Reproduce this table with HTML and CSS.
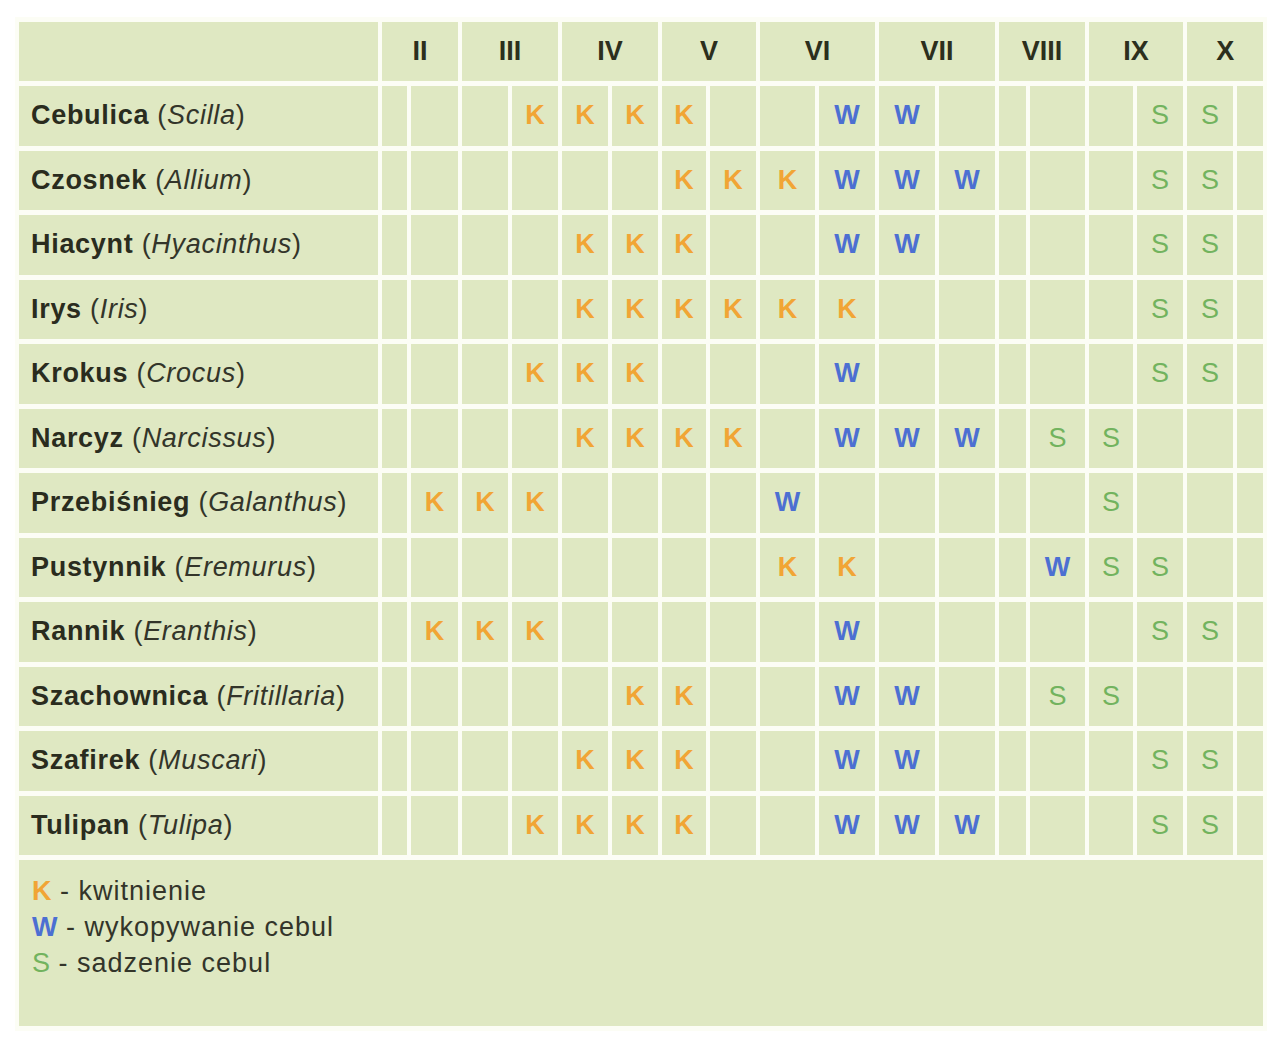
FILE: index.html
```html
<!DOCTYPE html>
<html lang="pl">
<head>
<meta charset="utf-8">
<title>Kalendarz roślin cebulowych</title>
<link rel="stylesheet" href="styles.css">
</head>
<body>
<table class="cal">
  <colgroup>
    <col class="c-name">
    <col class="w25"><col class="w47"><col class="w46"><col class="w46"><col class="w46"><col class="w46">
    <col class="w44"><col class="w46"><col class="w55"><col class="w56"><col class="w56"><col class="w56">
    <col class="w27"><col class="w55"><col class="w44"><col class="w46"><col class="w46"><col class="w26">
  </colgroup>
  <thead>
    <tr class="head">
      <th class="corner"></th>
      <th colspan="2">II</th><th colspan="2">III</th><th colspan="2">IV</th><th colspan="2">V</th>
      <th colspan="2">VI</th><th colspan="2">VII</th><th colspan="2">VIII</th><th colspan="2">IX</th><th colspan="2">X</th>
    </tr>
  </thead>
  <tbody>
    <tr><td class="name"><b>Cebulica</b> (<i>Scilla</i>)</td>
      <td></td><td></td><td></td><td class="k">K</td><td class="k">K</td><td class="k">K</td><td class="k">K</td><td></td><td></td><td class="w">W</td><td class="w">W</td><td></td><td></td><td></td><td></td><td class="s">S</td><td class="s">S</td><td></td></tr>
    <tr><td class="name"><b>Czosnek</b> (<i>Allium</i>)</td>
      <td></td><td></td><td></td><td></td><td></td><td></td><td class="k">K</td><td class="k">K</td><td class="k">K</td><td class="w">W</td><td class="w">W</td><td class="w">W</td><td></td><td></td><td></td><td class="s">S</td><td class="s">S</td><td></td></tr>
    <tr><td class="name"><b>Hiacynt</b> (<i>Hyacinthus</i>)</td>
      <td></td><td></td><td></td><td></td><td class="k">K</td><td class="k">K</td><td class="k">K</td><td></td><td></td><td class="w">W</td><td class="w">W</td><td></td><td></td><td></td><td></td><td class="s">S</td><td class="s">S</td><td></td></tr>
    <tr><td class="name"><b>Irys</b> (<i>Iris</i>)</td>
      <td></td><td></td><td></td><td></td><td class="k">K</td><td class="k">K</td><td class="k">K</td><td class="k">K</td><td class="k">K</td><td class="k">K</td><td></td><td></td><td></td><td></td><td></td><td class="s">S</td><td class="s">S</td><td></td></tr>
    <tr><td class="name"><b>Krokus</b> (<i>Crocus</i>)</td>
      <td></td><td></td><td></td><td class="k">K</td><td class="k">K</td><td class="k">K</td><td></td><td></td><td></td><td class="w">W</td><td></td><td></td><td></td><td></td><td></td><td class="s">S</td><td class="s">S</td><td></td></tr>
    <tr><td class="name"><b>Narcyz</b> (<i>Narcissus</i>)</td>
      <td></td><td></td><td></td><td></td><td class="k">K</td><td class="k">K</td><td class="k">K</td><td class="k">K</td><td></td><td class="w">W</td><td class="w">W</td><td class="w">W</td><td></td><td class="s">S</td><td class="s">S</td><td></td><td></td><td></td></tr>
    <tr><td class="name"><b>Przebiśnieg</b> (<i>Galanthus</i>)</td>
      <td></td><td class="k">K</td><td class="k">K</td><td class="k">K</td><td></td><td></td><td></td><td></td><td class="w">W</td><td></td><td></td><td></td><td></td><td></td><td class="s">S</td><td></td><td></td><td></td></tr>
    <tr><td class="name"><b>Pustynnik</b> (<i>Eremurus</i>)</td>
      <td></td><td></td><td></td><td></td><td></td><td></td><td></td><td></td><td class="k">K</td><td class="k">K</td><td></td><td></td><td></td><td class="w">W</td><td class="s">S</td><td class="s">S</td><td></td><td></td></tr>
    <tr><td class="name"><b>Rannik</b> (<i>Eranthis</i>)</td>
      <td></td><td class="k">K</td><td class="k">K</td><td class="k">K</td><td></td><td></td><td></td><td></td><td></td><td class="w">W</td><td></td><td></td><td></td><td></td><td></td><td class="s">S</td><td class="s">S</td><td></td></tr>
    <tr><td class="name"><b>Szachownica</b> (<i>Fritillaria</i>)</td>
      <td></td><td></td><td></td><td></td><td></td><td class="k">K</td><td class="k">K</td><td></td><td></td><td class="w">W</td><td class="w">W</td><td></td><td></td><td class="s">S</td><td class="s">S</td><td></td><td></td><td></td></tr>
    <tr><td class="name"><b>Szafirek</b> (<i>Muscari</i>)</td>
      <td></td><td></td><td></td><td></td><td class="k">K</td><td class="k">K</td><td class="k">K</td><td></td><td></td><td class="w">W</td><td class="w">W</td><td></td><td></td><td></td><td></td><td class="s">S</td><td class="s">S</td><td></td></tr>
    <tr><td class="name"><b>Tulipan</b> (<i>Tulipa</i>)</td>
      <td></td><td></td><td></td><td class="k">K</td><td class="k">K</td><td class="k">K</td><td class="k">K</td><td></td><td></td><td class="w">W</td><td class="w">W</td><td class="w">W</td><td></td><td></td><td></td><td class="s">S</td><td class="s">S</td><td></td></tr>
  </tbody>
  <tfoot>
    <tr>
      <td class="legend" colspan="19">
        <div class="legend-line"><span class="k">K</span> - kwitnienie</div>
        <div class="legend-line"><span class="w">W</span> - wykopywanie cebul</div>
        <div class="legend-line"><span class="s">S</span> - sadzenie cebul</div>
      </td>
    </tr>
  </tfoot>
</table>
</body>
</html>
```

FILE: styles.css
```css
html, body {
  margin: 0;
  background: #ffffff;
}

body {
  padding: 17px 0 0 15px;
  font-family: "Liberation Sans", Arial, sans-serif;
  color: #2c2c22;
}

.cal {
  table-layout: fixed;
  width: 1252px;
  border-collapse: separate;
  border-spacing: 4px 5px;
  background: #fcfdf5;
  font-size: 27px;
  letter-spacing: 0.7px;
}

.c-name { width: 359px; }
.w25 { width: 25px; }
.w26 { width: 26px; }
.w27 { width: 27px; }
.w44 { width: 44px; }
.w46 { width: 46px; }
.w47 { width: 47px; }
.w55 { width: 55px; }
.w56 { width: 56px; }

.cal th,
.cal td {
  background: #dfe8c2;
  padding: 0;
  text-align: center;
  vertical-align: middle;
}

.head th {
  height: 59px;
  font-weight: bold;
  color: #2c2f1d;
  letter-spacing: 0;
}

tbody tr {
  height: 59.5px;
}

.cal td.name {
  text-align: left;
  padding-left: 12px;
  white-space: nowrap;
  color: #33352a;
}

.name b {
  color: #2a2c1e;
}

.k, .w {
  font-weight: bold;
  letter-spacing: 0;
}

.k { color: #f1a535; }
.w { color: #4c6fd2; }
.s { color: #72b35e; letter-spacing: 0; }

.cal td.legend {
  height: 153px;
  text-align: left;
  vertical-align: top;
  padding: 13px 0 0 13px;
  line-height: 36px;
  letter-spacing: 1px;
  color: #33352a;
}
```
